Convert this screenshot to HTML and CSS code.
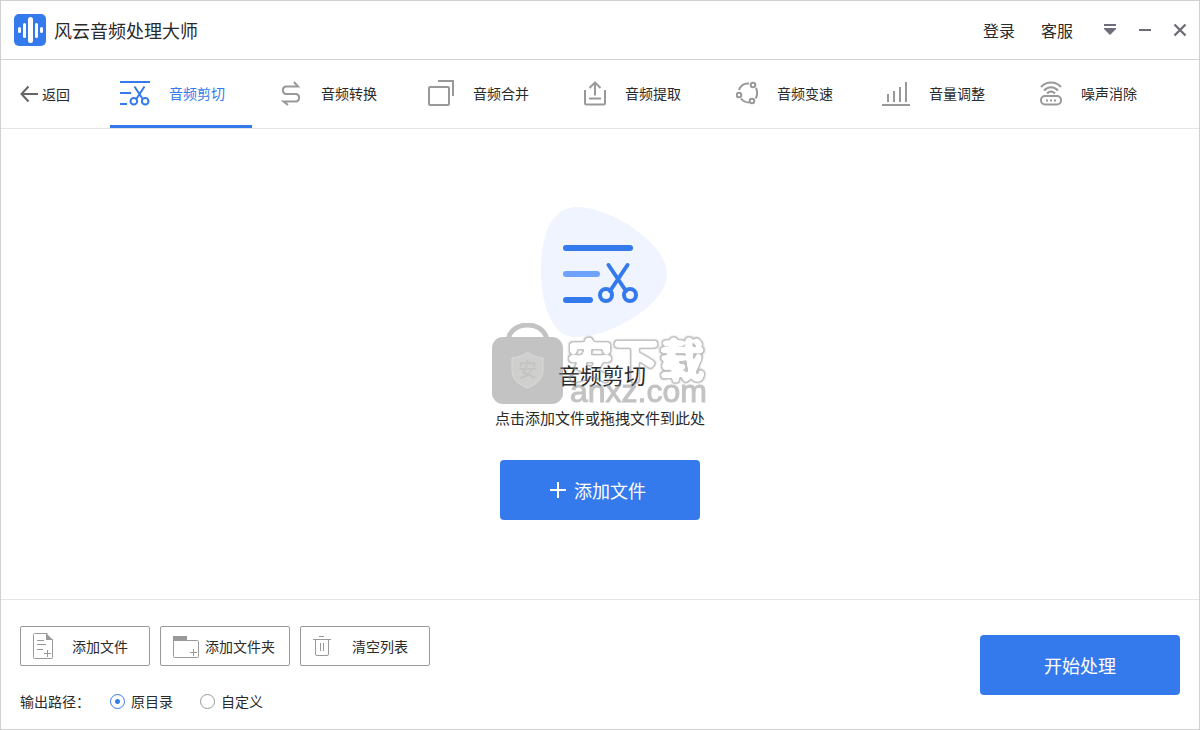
FILE: index.html
```html
<!DOCTYPE html>
<html lang="zh-CN">
<head>
<meta charset="utf-8">
<meta name="viewport" content="width=device-width, initial-scale=1">
<title>风云音频处理大师</title>
<link rel="stylesheet" href="styles.css">
</head>
<body>
<div class="app">
  <header class="titlebar">
    <svg class="logo" viewBox="0 0 32 32" width="32" height="32" aria-hidden="true">
      <rect width="32" height="32" rx="5" fill="#357aec"/>
      <g stroke="#fff" stroke-linecap="round">
        <path d="M5.500 14.500v3M27.500 14.500v3" stroke-width="3"/>
        <path d="M10.500 10.500v12M22.500 10.500v12" stroke-width="3"/>
        <path d="M16.500 5.500v21" stroke-width="5"/>
      </g>
    </svg>
    <h1 class="app-name">风云音频处理大师</h1>
    <div class="account">
      <a class="account-link" href="#login">登录</a>
      <a class="account-link" href="#service">客服</a>
    </div>
    <div class="window-controls">
      <button class="window-button" type="button" aria-label="菜单">
        <svg viewBox="0 0 14 14" width="14" height="14"><path d="M1 2h12" stroke="#6f6d7a" stroke-width="2"/><path d="M1 5h12v1l-6 6l-6-6z" fill="#6f6d7a"/></svg>
      </button>
      <button class="window-button" type="button" aria-label="最小化">
        <svg viewBox="0 0 14 14" width="14" height="14"><path d="M1 7h12" stroke="#6f6d7a" stroke-width="2"/></svg>
      </button>
      <button class="window-button" type="button" aria-label="关闭">
        <svg viewBox="0 0 14 14" width="14" height="14"><path d="M1.500 1.500l11 11M12.500 1.500l-11 11" stroke="#6f6d7a" stroke-width="2.400"/></svg>
      </button>
    </div>
  </header>

  <nav class="toolbar">
    <a class="back" href="#back">
      <svg viewBox="0 0 18 18" width="18" height="18" fill="none" stroke="#666" stroke-width="2"><path d="M8.500 1.500L1.500 9L8.500 16.500M2 9h16"/></svg>
      <span>返回</span>
    </a>
    <div class="tabs">
      <a class="tab tab-active" href="#cut">
        <span class="tab-icon"><svg viewBox="0 0 30 26" width="30" height="26" fill="none" stroke="#357aec" stroke-width="2"><path d="M0 2h30M0 13h11M0 24h7M14.500 6.500l8.500 13M24.500 6.500l-8.500 13"/><circle cx="13.800" cy="21.200" r="3.300"/><circle cx="25.200" cy="21.200" r="3.300"/></svg></span>
        <span>音频剪切</span>
      </a>
      <a class="tab" href="#convert">
        <span class="tab-icon"><svg viewBox="0 0 22 26" width="22" height="26" fill="none" stroke="#999" stroke-width="2"><path d="M14 2l4 4.500H5.500a4 4 0 0 0 0 7.500h11a4 4 0 0 1 0 7.500H3.500L8 25"/></svg></span>
        <span>音频转换</span>
      </a>
      <a class="tab" href="#merge">
        <span class="tab-icon"><svg viewBox="0 0 26 26" width="26" height="26" fill="none" stroke="#999" stroke-width="2"><rect x="1" y="7" width="20" height="18" rx="1"/><path d="M10 1h15v15"/></svg></span>
        <span>音频合并</span>
      </a>
      <a class="tab" href="#extract">
        <span class="tab-icon"><svg viewBox="0 0 22 26" width="22" height="26" fill="none" stroke="#999" stroke-width="2"><path d="M1 10v13a1.500 1.500 0 0 0 1.500 1.500h17A1.500 1.500 0 0 0 21 23V10M11 2.500v13M5.500 8L11 2.500L16.500 8M5 18.500h12"/></svg></span>
        <span>音频提取</span>
      </a>
      <a class="tab" href="#speed">
        <span class="tab-icon"><svg viewBox="0 0 22 26" width="22" height="26" fill="none" stroke="#999" stroke-width="2"><circle cx="17" cy="5" r="2.300"/><circle cx="3" cy="15" r="2.300"/><circle cx="16" cy="21" r="2.300"/><path d="M13 3.500C8 3 4.500 6 3 10M20 8c1.500 3.500 1.500 7.500-.5 10.500M5 18.500c2 2.500 4.500 4 8 4"/></svg></span>
        <span>音频变速</span>
      </a>
      <a class="tab" href="#volume">
        <span class="tab-icon"><svg viewBox="0 0 28 26" width="28" height="26" fill="none" stroke="#999" stroke-width="2"><path d="M0 25h28M6 22v-8M12 22V11M18 22V7M24 22V2"/></svg></span>
        <span>音量调整</span>
      </a>
      <a class="tab" href="#denoise">
        <span class="tab-icon"><svg viewBox="0 0 22 26" width="22" height="26" fill="none" stroke="#999" stroke-width="2"><rect x="1" y="16" width="20" height="8.500" rx="4"/><path d="M1 7c5.500-6 14.500-6 20 0M4 10.500c4-4.500 10-4.500 14 0M7 13.500c2.500-2.500 5.500-2.500 8 0"/><path d="M6 20.500h2M10 20.500h2M14 20.500h2"/></svg></span>
        <span>噪声消除</span>
      </a>
    </div>
  </nav>

  <main class="drop-area">
    <div class="hero">
      <svg class="hero-art" viewBox="533 207 134 130" width="134" height="130" fill="none" stroke-linecap="round" aria-hidden="true">
        <path d="M578 207C608 207 667 242 667 274C667 304 612 337 575 337C550 337 541 300 541 272C541 238 549 207 578 207Z" fill="#eff4fe"/>
        <path d="M566 248h64M566 300h24" stroke="#357aec" stroke-width="6"/>
        <path d="M566 274h31" stroke="#6ea2fb" stroke-width="6"/>
        <g stroke="#357aec" stroke-width="4"><path d="M608.500 265L626 291M627.500 265L610 291"/><circle cx="606" cy="295" r="6"/><circle cx="630" cy="295" r="6"/></g>
      </svg>
      <h2 class="hero-title">音频剪切</h2>
      <p class="hero-hint">点击添加文件或拖拽文件到此处</p>
      <button class="primary add" type="button">
        <svg viewBox="0 0 16 16" width="16" height="16" stroke="#fff" stroke-width="2"><path d="M8 0v16M0 8h16"/></svg>
        <span>添加文件</span>
      </button>
      <div class="watermark">
        <svg viewBox="0 0 71 81" width="71" height="81" aria-hidden="true">
          <filter id="contour" x="-10%" y="-10%" width="120%" height="120%" color-interpolation-filters="sRGB">
            <feGaussianBlur stdDeviation="1.600"/>
            <feComponentTransfer><feFuncA type="table" tableValues="0 1 1 0 0 0 0 0"/></feComponentTransfer>
          </filter>
          <path d="M16 17C19-3 52-3 55 17" fill="none" stroke="#888" stroke-width="5"/>
          <rect y="14" width="71" height="67" rx="11" fill="#888"/>
          <path d="M35.500 29C31 33 26 34 20 35V47C20 56 26 61 35.500 65C45 61 51 56 51 47V35C45 34 40 33 35.500 29Z" fill="#a0a39f" stroke="#b4b6b4" stroke-width="1"/>
          <text class="watermark-seal" x="35.500" y="54" text-anchor="middle">安</text>
        </svg>
        <div class="watermark-words">
          <span class="watermark-name">安下载</span>
          <span class="watermark-site">anxz.com</span>
        </div>
      </div>
    </div>
  </main>

  <footer class="footer">
    <div class="options">
      <div class="file-actions">
        <button class="file-button" type="button">
          <svg viewBox="0 0 28 28" width="28" height="28" fill="none" stroke="#999"><path d="M15.500 1.500H2.500a1 1 0 0 0-1 1v23a1 1 0 0 0 1 1h17a1 1 0 0 0 1-1V7"/><path d="M14 1l7 7h-7z" fill="#999" stroke="none"/><path d="M5 8.500h7M5 12.500h9M5 17.500h6M12 21.500h7M15.500 18v7"/></svg>
          <span class="file-label">添加文件</span>
        </button>
        <button class="file-button file-button-long" type="button">
          <svg viewBox="0 0 28 28" width="28" height="28" fill="none" stroke="#999"><path d="M1 4h14v5H1z" fill="#999" stroke="none"/><path d="M1.500 8.500h24a1 1 0 0 1 1 1v15a1 1 0 0 1-1 1h-23a1 1 0 0 1-1-1zM18 20.500h7M21.500 17v7"/></svg>
          <span class="file-label">添加文件夹</span>
        </button>
        <button class="file-button" type="button">
          <svg viewBox="0 0 28 28" width="28" height="28" fill="none" stroke="#999"><path d="M7 4.500h5M1 7.500h18M3.500 8v14a1.500 1.500 0 0 0 1.500 1.500h10a1.500 1.500 0 0 0 1.500-1.500V8M8.500 11v8M11.500 11v8"/></svg>
          <span class="file-label">清空列表</span>
        </button>
      </div>
      <div class="output" role="radiogroup" aria-labelledby="output-label">
        <span class="output-label" id="output-label">输出路径：</span>
        <label class="choice"><input class="radio" type="radio" name="output" checked>原目录</label>
        <label class="choice"><input class="radio" type="radio" name="output">自定义</label>
      </div>
    </div>
    <button class="primary start" type="button">开始处理</button>
  </footer>
</div>
</body>
</html>
```
FILE: styles.css
```css
* {
  box-sizing: border-box;
}

body {
  margin: 0;
  color: #2a2a2a;
  background: #fff;
  font: 14px/20px "Noto Sans CJK SC", sans-serif;
}

svg {
  display: block;
  flex: none;
}

a {
  color: inherit;
  text-decoration: none;
}

button {
  padding: 0;
  color: inherit;
  font: inherit;
  cursor: pointer;
}

.app {
  display: flex;
  flex-direction: column;
  min-height: 100vh;
  border: 1px solid #d0d0d0;
}

.titlebar {
  display: flex;
  align-items: center;
  height: 59px;
  padding: 0 12px 0 13px;
  border-bottom: 1px solid #d3d3d3;
}

.app-name {
  margin: 0 auto 0 8px;
  font-size: 18px;
  font-weight: 400;
  line-height: 24px;
}

.account {
  display: flex;
  gap: 26px;
  font-size: 16px;
}

.window-controls {
  display: flex;
  gap: 21px;
  margin-left: 30px;
}

.window-button {
  border: 0;
  background: none;
}

.toolbar {
  display: flex;
  height: 69px;
  border-bottom: 1px solid #e5e5e5;
}

.back {
  display: flex;
  align-items: center;
  gap: 4px;
  width: 109px;
  padding-left: 19px;
}

.tabs {
  display: flex;
  gap: 10px;
}

.tab {
  display: flex;
  align-items: center;
  gap: 19px;
  width: 142px;
  border-bottom: 3px solid transparent;
}

.tab-active {
  color: #357aec;
  border-color: #357aec;
}

.tab-icon {
  display: flex;
  justify-content: flex-end;
  width: 40px;
}

.drop-area {
  display: flex;
  flex: 1;
  align-items: center;
  justify-content: center;
  padding-bottom: 2px;
}

.hero {
  position: relative;
  display: flex;
  flex-direction: column;
  align-items: center;
}

.hero-title {
  margin: 22px 0 18px;
  padding-left: 4px;
  font-size: 22px;
  font-weight: 400;
  line-height: 30px;
}

.hero-hint {
  margin: 0 0 31px;
  font-size: 15px;
  line-height: 22px;
}

.primary {
  display: flex;
  align-items: center;
  justify-content: center;
  gap: 8px;
  width: 200px;
  height: 60px;
  color: #fff;
  font-size: 18px;
  background: #357aec;
  border: 0;
  border-radius: 4px;
}

.add {
  padding-right: 4px;
}

.watermark {
  position: absolute;
  top: 116px;
  left: -3px;
  display: flex;
  gap: 4px;
  opacity: 0.5;
  pointer-events: none;
}

.watermark-seal {
  fill: #888;
  font-size: 19px;
  font-weight: 500;
}

.watermark-words {
  display: flex;
  flex-direction: column;
  padding-top: 10px;
}

.watermark-name {
  color: #888;
  font-size: 46px;
  font-weight: 700;
  line-height: 48px;
  white-space: nowrap;
  filter: url(#contour);
}

.watermark-site {
  margin: -6px 0 0 3px;
  color: #888;
  font-family: "Liberation Sans", sans-serif;
  font-size: 32px;
  line-height: 32px;
  -webkit-text-stroke: 1px #888;
}

.footer {
  display: flex;
  align-items: flex-start;
  justify-content: space-between;
  padding: 26px 19px 18px;
  border-top: 1px solid #e5e5e5;
}

.options {
  display: flex;
  flex-direction: column;
  gap: 25px;
}

.file-actions {
  display: flex;
  gap: 10px;
}

.file-button {
  display: flex;
  align-items: center;
  width: 130px;
  height: 40px;
  padding-left: 11px;
  background: #fff;
  border: 1px solid #999;
  border-radius: 2px;
}

.file-label {
  flex: 1;
  padding-right: 21px;
  text-align: right;
}

.file-button-long .file-label {
  padding-right: 14px;
}

.output {
  display: flex;
}

.output-label {
  width: 90px;
}

.choice {
  display: flex;
  align-items: center;
  gap: 6px;
  margin-right: 27px;
}

.radio {
  width: 15px;
  height: 15px;
  margin: 0;
  appearance: none;
  border: 1px solid #999;
  border-radius: 50%;
}

.radio:checked {
  border-color: #357aec;
  background: radial-gradient(circle, #357aec 2px, transparent 3px);
}

.start {
  margin-top: 9px;
}
```
